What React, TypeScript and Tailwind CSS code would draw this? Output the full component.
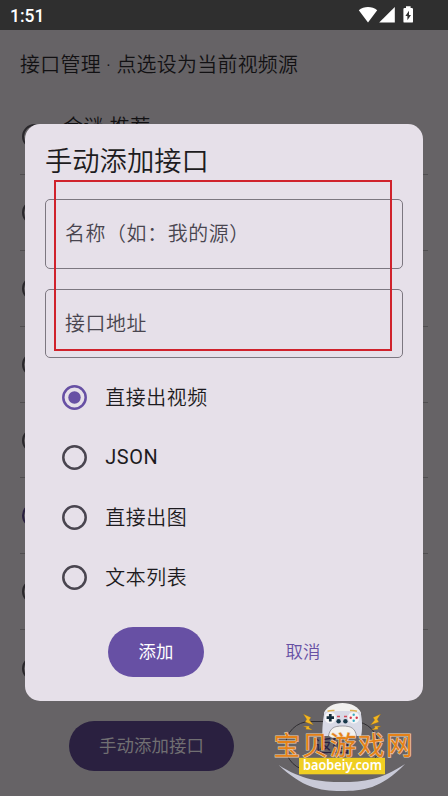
import React, { useState } from 'react';
import clsx from 'clsx';

interface Source {
  id: number;
  name: string;
}

const SOURCES: Source[] = [
  { id: 1, name: '合谜 推荐' },
  { id: 2, name: '' },
  { id: 3, name: '' },
  { id: 4, name: '' },
  { id: 5, name: '' },
  { id: 6, name: '' },
  { id: 7, name: '' },
  { id: 8, name: '' },
];

const TYPES = ['直接出视频', 'JSON', '直接出图', '文本列表'];

const StatusBar = () => (
  <header className="flex h-[30px] shrink-0 items-center justify-between bg-[#2f2f2f] pl-[10px] pr-[34px] text-white">
    <span className="pt-[1px] text-[17.5px] font-medium leading-[30px]">1:51</span>
    <svg width="56" height="20" viewBox="0 0 56 20" fill="currentColor" aria-hidden="true">
      <path d="M0.8 5.2C6 .9 14 .9 19.2 5.2L10 17.4Z" />
      <path d="M36.8 2V17.6H21.2Z" />
      <path
        fillRule="evenodd"
        d="M48 1.2h4.6v1.9h1.3q1.1 0 1.1 1.1v12.2q0 1.2-1.1 1.2h-7.4q-1.1 0-1.1-1.2V4.2q0-1.1 1.1-1.1H48ZM51 5.8l-3.6 5.2h2v4.2l3.6-5.3h-2Z"
      />
    </svg>
  </header>
);

const SourceRow: React.FC<{ source: Source; active: boolean }> = ({ source, active }) => (
  <li className="flex h-[75.9px] items-center gap-[16px] border-b border-[#504e50] last:border-b-0">
    <span
      className={clsx(
        'ml-[2px] size-[25px] shrink-0 rounded-full border-[2.5px]',
        active ? 'border-[#2a2040]' : 'border-[#2a282c]',
      )}
    />
    <span className="pb-[18px] text-[20px] font-[350] leading-[28px] tracking-[0.6px]">{source.name}</span>
  </li>
);

const TextField: React.FC<{ label: string }> = ({ label }) => (
  <div className="flex h-[69.6px] items-center rounded-[5px] border border-[#7c7780] px-[19px] pt-[3px] text-[19.9px] font-[350] tracking-[0.65px] text-[#49454f]">
    {label}
  </div>
);

const Radio: React.FC<{ checked: boolean }> = ({ checked }) => (
  <svg width="25" height="25" viewBox="0 0 25 25" fill="none" className={checked ? 'text-[#6750a4]' : 'text-[#49454f]'}>
    <circle cx="12.5" cy="12.5" r="11.2" stroke="currentColor" strokeWidth="2.5" />
    {checked && <circle cx="12.5" cy="12.5" r="6.2" fill="currentColor" />}
  </svg>
);

const Bolt: React.FC<{ transform?: string }> = ({ transform }) => (
  <g transform={transform} fill="#f3b61f" stroke="#8a6420" strokeWidth="0.3">
    <path d="M28.800 18.500 36.500 22 34.800 24.600 39 29.600 30.600 26.600 32.200 23.800Z" />
    <path d="M28.500 30.800 34.800 30.500 34.600 32.200 38 34.400 31.200 33.800 31.800 32Z" />
  </g>
);

const Watermark = () => (
  <svg
    className="pointer-events-none absolute left-[264px] top-[696px]"
    width="160"
    height="100"
    viewBox="0 0 160 100"
    aria-hidden="true"
  >
    <path d="M14.6 69C38 91 55 95 77 95S117 93 141 68C117 84 100 86 78 86S38 84 14.6 69Z" fill="#c9cad8" />
    <Bolt transform="translate(10.5 -0.5)" />
    <Bolt transform="translate(145.5 -0.5) scale(-1 1)" />
    {/* gamepad */}
    <path d="M60 17C62 11 70 7 78.5 7S95 11 97 17V28H60Z" fill="#f1f0ef" />
    <path d="M60.5 16C66 14.500 91 14.500 96.500 16 98.500 24 98.500 36 97 40H92C90 32 86 30.500 78.500 30.500S67 32 64.500 40H58.500C58 33 59 23 60.500 16Z" fill="#d9dae6" />
    <path d="M64.5 40C66 32 70 30 78.500 30S91 32 92.500 40L88 42H68Z" fill="#f4f2ef" stroke="#55535c" strokeWidth="0.5" />
    <circle cx="66.3" cy="21.7" r="5.8" fill="#f5f4f5" />
    <circle cx="89.7" cy="21.7" r="5.8" fill="#f5f4f5" />
    <path d="M63.5 15.2q3-1 7-.7M86 14.5q4-.3 7 .7" stroke="#dfb354" strokeWidth="1.5" fill="none" />
    <path d="M66.3 18V25.4M62.6 21.7H70" stroke="#142c3a" strokeWidth="2.7" />
    <circle cx="89.7" cy="18.7" r="1.2" fill="#3cabc4" />
    <circle cx="89.7" cy="24.7" r="1.2" fill="#3cabc4" />
    <circle cx="86.7" cy="21.7" r="1.2" fill="#d53649" />
    <circle cx="92.7" cy="21.7" r="1.2" fill="#d53649" />
    <path d="M73 20.5h3M80 20.5h3" stroke="#d54a5b" strokeWidth="1.4" />
    <circle cx="74.6" cy="25.3" r="2.2" fill="#19394a" />
    <circle cx="81.4" cy="25.3" r="2.2" fill="#19394a" />
    <text
      x="9.5"
      y="58.5"
      textLength="139"
      className="font-['Noto_Sans_CJK_SC',sans-serif] text-[26.5px] font-normal [paint-order:stroke]"
      fill="#e58218"
      stroke="#e9ceb0"
      strokeWidth="1.2"
    >
      宝贝游戏网
    </text>
    <rect x="35" y="61.8" width="86" height="16.5" fill="#efce22" />
    <text
      x="39"
      y="74.4"
      textLength="79"
      lengthAdjust="spacingAndGlyphs"
      className="font-['Noto_Sans',sans-serif] text-[14.5px] font-semibold"
      fill="#ffffff"
    >
      baobeiy.com
    </text>
  </svg>
);

const AddSourceDialog = () => {
  const [type, setType] = useState(TYPES[0]);

  return (
    <div
      role="dialog"
      className="absolute left-[25px] top-[124.3px] flex h-[577px] w-[398px] flex-col rounded-[15px] bg-[#e6e0e9] px-[20px] pt-[20px] text-[#1d1b20]"
    >
      <h2 className="h-[54.7px] text-[27.3px] font-[350] leading-[37px]">手动添加接口</h2>
      <div className="flex flex-col gap-[20px]">
        <TextField label="名称（如：我的源）" />
        <TextField label="接口地址" />
      </div>
      <div className="mt-[9.8px] flex flex-col">
        {TYPES.map((t) => (
          <button
            key={t}
            type="button"
            onClick={() => setType(t)}
            className="flex h-[59.75px] items-center gap-[18px] pl-[17.3px] text-left text-[19.9px] tracking-[0.6px]"
          >
            <Radio checked={t === type} />
            <span className={t === 'JSON' ? 'font-normal' : 'pt-[3px] font-[350]'}>{t}</span>
          </button>
        ))}
      </div>
      <div className="mt-[20px] flex h-[50px] gap-[66px] pl-[63px] text-[17.4px] tracking-[0.1px]">
        <button type="button" className="w-[96px] rounded-full bg-[#6750a4] text-white">添加</button>
        <button type="button" className="w-[66px] font-[350] text-[#6750a4]">取消</button>
      </div>
      <div className="pointer-events-none absolute left-[29px] top-[55.7px] h-[171px] w-[338px] border-2 border-[#d0222c]" />
    </div>
  );
};

export default function App() {
  return (
    <div className="relative flex h-[796px] w-[448px] flex-col overflow-hidden bg-[#666366] font-[Roboto,'Noto_Sans_CJK_SC',sans-serif] text-[#121113]">
      <StatusBar />
      <main className="flex flex-col px-[20px]">
        <h1 className="h-[69px] pt-[22px] text-[19.9px] font-[350] leading-[28px] tracking-[0.32px]">接口管理 · 点选设为当前视频源</h1>
        <ul className="h-[607px]">
          {SOURCES.map((s) => (
            <SourceRow key={s.id} source={s} active={s.id === 6} />
          ))}
        </ul>
        <div className="mt-[15px] flex h-[50px] gap-[51px] pl-[49px] text-[17.4px] tracking-[0.1px]">
          <button type="button" className="w-[165px] rounded-full bg-[#2a2040] text-[#716f72]">手动添加接口</button>
          <button type="button" className="w-[94px] rounded-full border border-[#302e32] text-[#2a2040]">返回</button>
        </div>
      </main>
      <AddSourceDialog />
      <Watermark />
    </div>
  );
}
